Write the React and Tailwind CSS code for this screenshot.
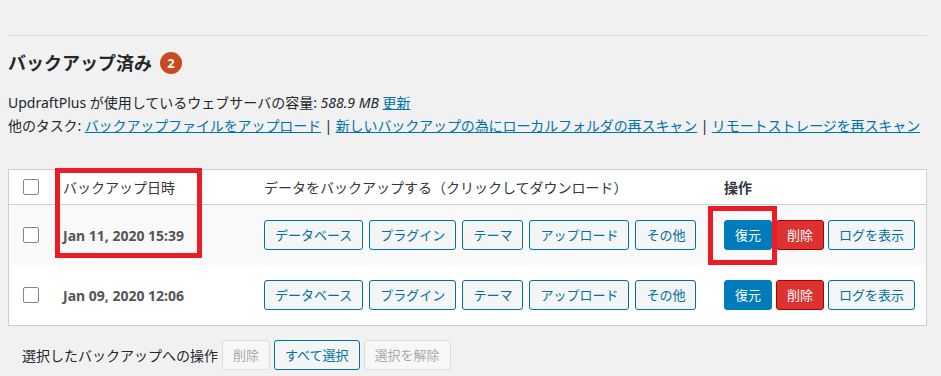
import React from 'react';

const font = { fontFamily: '"Noto Sans", "Noto Sans CJK JP", sans-serif' };

const parts = ['データベース', 'プラグイン', 'テーマ', 'アップロード', 'その他'];

const rows = [
  { date: 'Jan 11, 2020 15:39', striped: true },
  { date: 'Jan 09, 2020 12:06', striped: false },
];

function Checkbox() {
  return <span className="block w-4 h-4 bg-white border border-[#7e8993] rounded-[2px]" />;
}

function OutlineButton({ children }) {
  return (
    <button className="h-[30px] px-[10px] text-[13px] leading-[28px] text-[#0071a1] bg-[#f3f5f6] border border-[#0071a1] rounded-[3px] whitespace-nowrap">
      {children}
    </button>
  );
}

export default function App() {
  return (
    <div className="relative w-[941px] h-[376px] overflow-hidden bg-[#f1f1f1] text-[#23282d] pl-2 pr-[14px]" style={font}>
      <div className="h-[35px]" />
      <div className="border-t border-[#dcdcde]" />

      <h2 className="mt-[14px] flex items-center gap-2 text-[18px] leading-[26px] font-bold">
        バックアップ済み
        <span className="w-[22px] h-[22px] rounded-full bg-[#ca4a1f] text-white text-[13px] font-bold flex items-center justify-center">2</span>
      </h2>

      <p className="mt-[15px] text-[14px] leading-[23px] whitespace-nowrap">
        UpdraftPlus が使用しているウェブサーバの容量: <em>588.9 MB</em>{' '}
        <a className="text-[#0073aa] underline">更新</a>
      </p>
      <p className="text-[14px] leading-[23px] whitespace-nowrap tracking-[-0.1px]">
        他のタスク: <a className="text-[#0073aa] underline">バックアップファイルをアップロード</a> |{' '}
        <a className="text-[#0073aa] underline">新しいバックアップの為にローカルフォルダの再スキャン</a> |{' '}
        <a className="text-[#0073aa] underline">リモートストレージを再スキャン</a>
      </p>

      <div className="mt-[32px] bg-white border border-[#ccd0d4]">
        <div className="grid grid-cols-[46px_201px_460px_1fr] h-[35px] items-center border-b border-[#ccd0d4] text-[14px] text-[#32373c]">
          <div className="pl-[14px]"><Checkbox /></div>
          <div className="pl-2">バックアップ日時</div>
          <div className="pl-2">データをバックアップする（クリックしてダウンロード）</div>
          <div className="pl-2 font-bold">操作</div>
        </div>
        {rows.map((r) => (
          <div
            key={r.date}
            className={`grid grid-cols-[46px_201px_460px_1fr] h-[60px] items-center ${r.striped ? 'bg-[#f9f9f9]' : 'bg-white'}`}
          >
            <div className="pl-[14px]"><Checkbox /></div>
            <div className="pl-2 text-[14px] font-bold text-[#555]">{r.date}</div>
            <div className="pl-2 flex gap-[6px]">
              {parts.map((p) => (
                <OutlineButton key={p}>{p}</OutlineButton>
              ))}
            </div>
            <div className="pl-2 flex gap-1">
              <button className="h-[30px] px-[10px] text-[13px] leading-[28px] text-white bg-[#007cba] border border-[#007cba] rounded-[3px]">復元</button>
              <button className="h-[30px] px-[10px] text-[13px] leading-[28px] text-white bg-[#dc3232] border border-[#a00] rounded-[3px]">削除</button>
              <OutlineButton>ログを表示</OutlineButton>
            </div>
          </div>
        ))}
      </div>

      <div className="mt-[14px] pl-[14px] flex items-center gap-1 text-[14px]">
        <span className="text-[#23282d]">選択したバックアップへの操作</span>
        <button className="h-[30px] px-[10px] text-[13px] leading-[28px] text-[#a7aaad] bg-[#f6f7f7] border border-[#dcdcde] rounded-[3px]">削除</button>
        <OutlineButton>すべて選択</OutlineButton>
        <button className="h-[30px] px-[10px] text-[13px] leading-[28px] text-[#a7aaad] bg-[#f6f7f7] border border-[#dcdcde] rounded-[3px]">選択を解除</button>
      </div>

      <div className="absolute left-[55px] top-[168px] w-[147px] h-[90px] border-[5px] border-[#ed1c24]" />
      <div className="absolute left-[708px] top-[206px] w-[69px] h-[59px] border-[5px] border-[#ed1c24]" />
    </div>
  );
}
